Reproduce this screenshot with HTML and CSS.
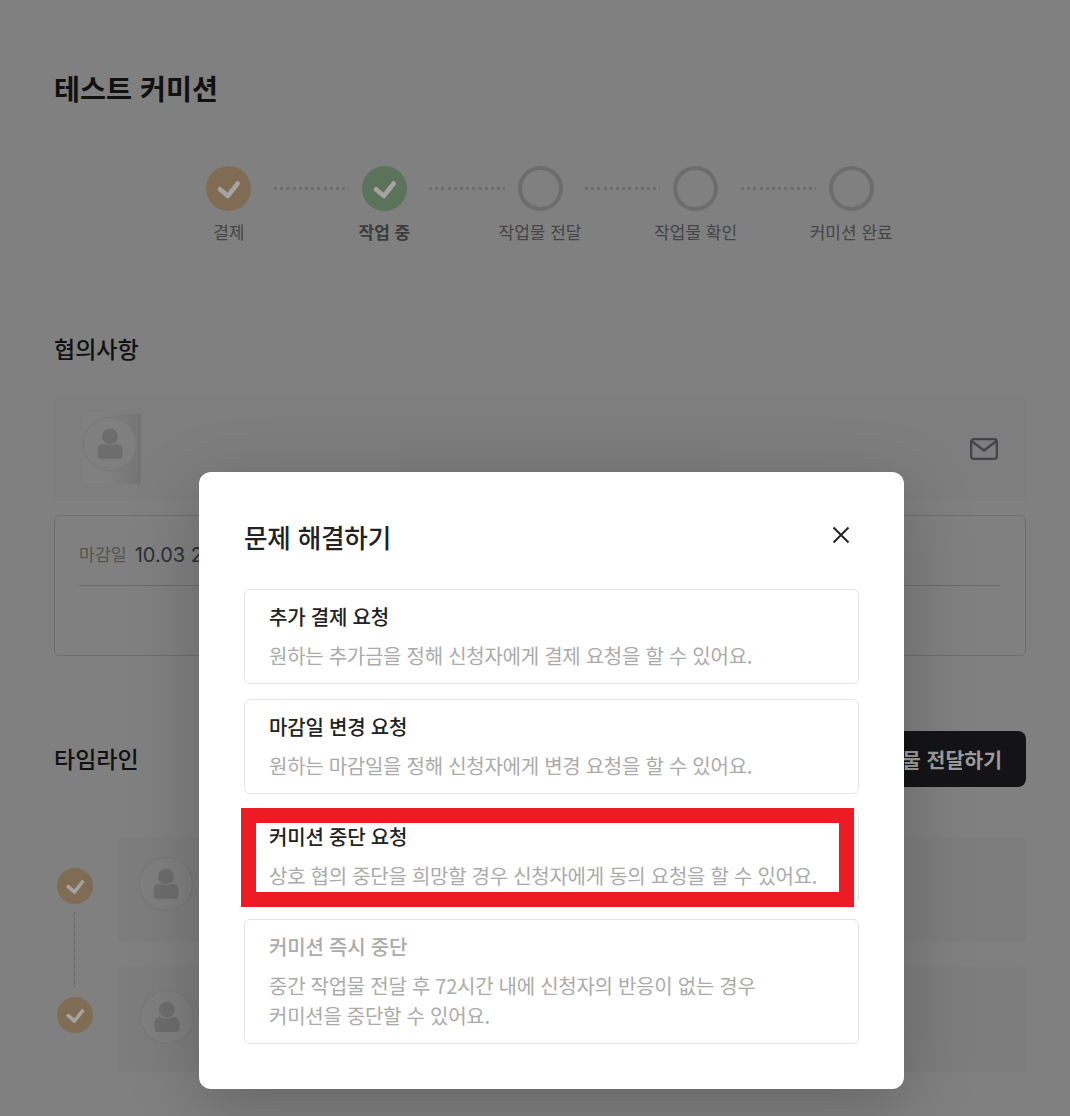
FILE: index.html
```html
<!DOCTYPE html>
<html lang="ko">
<head>
<meta charset="utf-8">
<title>테스트 커미션</title>
<link rel="stylesheet" href="styles.css">
</head>
<body>
<main class="page">
  <h1 class="page-title">테스트 커미션</h1>

  <div class="track">
    <span class="dot dot-orange"><svg viewBox="0 0 45 45" class="check"><path d="M14 23.2L21.8 30L31.7 17.5"/></svg></span>
    <span class="line"></span>
    <span class="dot dot-green"><svg viewBox="0 0 45 45" class="check"><path d="M14 23.2L21.8 30L31.7 17.5"/></svg></span>
    <span class="line"></span>
    <span class="dot dot-empty"></span>
    <span class="line"></span>
    <span class="dot dot-empty"></span>
    <span class="line"></span>
    <span class="dot dot-empty"></span>
  </div>
  <div class="labels">
    <span>결제</span>
    <span class="label-active">작업 중</span>
    <span>작업물 전달</span>
    <span>작업물 확인</span>
    <span>커미션 완료</span>
  </div>

  <h2 class="section-title section-discuss">협의사항</h2>
  <section class="profile">
    <div class="profile-photo">
      <svg viewBox="0 0 54 54" class="avatar avatar-top"><circle cx="27" cy="27" r="26.5" class="avatar-ring"/><path class="avatar-body" d="M21 27H33C37 27 39.5 29 39.5 32.5V38C39.5 40.5 38 42 35.5 42H18.5C16 42 14.5 40.5 14.5 38V32.5C14.5 29 17 27 21 27Z"/><circle cx="27" cy="19.5" r="8.5" class="avatar-head"/></svg>
    </div>
    <div class="profile-blur"></div>
    <svg viewBox="0 0 28 22" class="mail"><rect x="1.2" y="1.2" width="25.6" height="19.6" rx="2.5"/><path d="M1.5 3L14 12.5L26.5 3"/></svg>
  </section>
  <section class="info">
    <div class="info-row">
      <span class="info-key">마감일</span>
      <span class="info-value">10.03 2024</span>
    </div>
  </section>

  <div class="timeline-head">
    <h2 class="section-title section-timeline">타임라인</h2>
    <button class="deliver">작업물 전달하기</button>
  </div>

  <div class="timeline">
    <div class="marks">
      <svg viewBox="0 0 45 45" class="mark"><path d="M14 23.2L21.8 30L31.7 17.5"/></svg>
      <span class="mark-line"></span>
      <svg viewBox="0 0 45 45" class="mark"><path d="M14 23.2L21.8 30L31.7 17.5"/></svg>
    </div>
    <div class="entries">
      <div class="entry">
        <svg viewBox="0 0 54 54" class="avatar"><circle cx="27" cy="27" r="26.5" class="avatar-ring"/><path class="avatar-body" d="M21 27H33C37 27 39.5 29 39.5 32.5V38C39.5 40.5 38 42 35.5 42H18.5C16 42 14.5 40.5 14.5 38V32.5C14.5 29 17 27 21 27Z"/><circle cx="27" cy="19.5" r="8.5" class="avatar-head"/></svg>
      </div>
      <div class="entry entry-second">
        <svg viewBox="0 0 54 54" class="avatar"><circle cx="27" cy="27" r="26.5" class="avatar-ring"/><path class="avatar-body" d="M21 27H33C37 27 39.5 29 39.5 32.5V38C39.5 40.5 38 42 35.5 42H18.5C16 42 14.5 40.5 14.5 38V32.5C14.5 29 17 27 21 27Z"/><circle cx="27" cy="19.5" r="8.5" class="avatar-head"/></svg>
      </div>
    </div>
  </div>
</main>

<div class="modal" role="dialog">
  <div class="modal-head">
    <h2 class="modal-title">문제 해결하기</h2>
    <svg viewBox="0 0 18 18" class="close"><path d="M1.5 1.5L16.5 16.5M16.5 1.5L1.5 16.5"/></svg>
  </div>
  <div class="options">
    <div class="option">
      <div class="option-title">추가 결제 요청</div>
      <p class="option-desc">원하는 추가금을 정해 신청자에게 결제 요청을 할 수 있어요.</p>
    </div>
    <div class="option">
      <div class="option-title">마감일 변경 요청</div>
      <p class="option-desc">원하는 마감일을 정해 신청자에게 변경 요청을 할 수 있어요.</p>
    </div>
    <div class="option">
      <div class="option-title">커미션 중단 요청</div>
      <p class="option-desc">상호 협의 중단을 희망할 경우 신청자에게 동의 요청을 할 수 있어요.</p>
    </div>
    <div class="option option-off">
      <div class="option-title">커미션 즉시 중단</div>
      <p class="option-desc">중간 작업물 전달 후 72시간 내에 신청자의 반응이 없는 경우<br>커미션을 중단할 수 있어요.</p>
    </div>
  </div>
  <div class="highlight"></div>
</div>
</body>
</html>
```

FILE: styles.css
```css
* { box-sizing: border-box; }
html, body { margin: 0; height: 1116px; overflow: hidden; }
body {
  position: relative;
  background: #808080;
  font-family: "Noto Sans CJK KR", "Noto Sans", sans-serif;
  color: #111;
}
.page { padding: 68px 44px 0 54px; }
.page-title { margin: 0; font-size: 28.3px; line-height: 40px; font-weight: 700; color: #111; }

.track {
  display: grid;
  grid-template-columns: 45px 1fr 45px 1fr 45px 1fr 45px 1fr 45px;
  width: 668px;
  margin: 58px 0 0 152px;
  align-items: center;
}
.dot { width: 45px; height: 45px; border-radius: 50%; display: block; }
.dot-orange { background: #806c54; }
.dot-green { background: #5b725b; }
.dot-empty { border: 4px solid #6d6d6d; }
.check { display: block; width: 45px; height: 45px; fill: none; stroke: #a6a4a2; stroke-width: 4.5; stroke-linecap: round; stroke-linejoin: round; }
.line {
  height: 3px;
  margin: 0 13px 0 22.5px;
  background: repeating-linear-gradient(90deg, #6e6e6e 0 3px, transparent 3px 6.2px);
}
.labels {
  display: grid;
  grid-template-columns: repeat(5, 1fr);
  width: 778px;
  margin: 8px auto 0;
  text-align: center;
  font-size: 17px;
  line-height: 26px;
  color: #454545;
}
.label-active { font-weight: 700; color: #3c3c3c; }

.section-title { margin: 0; font-size: 23px; line-height: 32px; font-weight: 500; color: #111; }
.section-discuss { margin-top: 87px; }
.section-timeline { padding-bottom: 3px; }

.profile {
  display: flex;
  align-items: center;
  height: 102px;
  margin-top: 34px;
  padding: 0 28px 0 29px;
  background: #7e7e7e;
}
.profile-photo {
  width: 58px;
  height: 70px;
  background: linear-gradient(90deg, #808080 40%, #747474);
  flex: none;
}
.profile-blur { flex: 1; align-self: stretch; margin: 38px 250px 0 260px; background: #7d7d7d; }
.avatar { display: block; width: 54px; height: 54px; }
.avatar-top { margin-top: 3px; }
.avatar-ring { fill: #7f7f7f; stroke: #777; }
.avatar-body { fill: #6d6d6d; }
.avatar-head { fill: #6d6d6d; stroke: #808080; stroke-width: 1.2; }
.mail { width: 28px; height: 22px; flex: none; fill: none; stroke: #42444a; stroke-width: 2.3; stroke-linejoin: round; }

.info {
  height: 141px;
  margin-top: 15px;
  padding: 0 25px 0 24px;
  border: 1px solid #6e6e6e;
  border-radius: 6px;
}
.info-row {
  display: flex;
  align-items: center;
  gap: 8px;
  height: 70px;
  padding-top: 9px;
  border-bottom: 1px solid #6c6c6c;
}
.info-key { font-size: 17.3px; color: #57534d; position: relative; top: -2px; }
.info-value { font-size: 20px; color: #2c2f36; font-family: "Inter", "Noto Sans CJK KR", sans-serif; }

.timeline-head {
  display: flex;
  align-items: center;
  justify-content: space-between;
  margin-top: 75px;
}
.deliver {
  width: 240px;
  height: 56px;
  padding: 0 24px 0 0;
  border: 0;
  border-radius: 8px;
  background: #141416;
  color: #9c9c9c;
  font: 700 20.5px "Noto Sans CJK KR", sans-serif;
  text-align: right;
}

.timeline { display: flex; margin-top: 51px; }
.marks { width: 64px; flex: none; display: flex; flex-direction: column; padding: 30px 0 0 3px; }
.mark { display: block; width: 36px; height: 36px; border-radius: 50%; background: #806c54; fill: none; stroke: #a6a4a2; stroke-width: 4.5; stroke-linecap: round; stroke-linejoin: round; }
.mark-line { width: 0; height: 76px; margin: 8px 0 9px 17px; border-left: 1px dotted #5e5e5e; }
.entries { flex: 1; display: flex; flex-direction: column; gap: 25px; }
.entry { height: 104px; padding: 19px 0 0 21px; background: #7d7d7d; border-radius: 4px; }
.entry-second { height: 105px; padding: 23px 0 0 22px; }

.modal {
  position: absolute;
  left: 199px;
  top: 472px;
  width: 705px;
  height: 617px;
  padding: 46px 45px 45px;
  background: #fff;
  border-radius: 12px;
  box-shadow: 0 16px 70px rgba(0, 0, 0, 0.22);
  letter-spacing: -0.0125em;
}
.modal-head { display: flex; justify-content: space-between; align-items: flex-start; }
.modal-title { margin: 0; font-size: 25.6px; line-height: 38px; font-weight: 500; color: #222; }
.close { width: 18px; height: 18px; margin: 8px 9px 0 0; fill: none; stroke: #222; stroke-width: 2; }
.options { display: flex; flex-direction: column; gap: 15px; margin-top: 33px; }
.option { padding: 11px 24px 12px; border: 1px solid #e4e4e4; border-radius: 6px; }
.option-title { font-size: 20px; line-height: 32px; font-weight: 500; color: #222; }
.option-desc { margin: 8px 0 0; font-size: 20px; line-height: 30px; color: #aaa; white-space: nowrap; letter-spacing: -0.0135em; }
.option-off .option-title { color: #aaa; }
.highlight {
  position: absolute;
  left: 42px;
  top: 336px;
  width: 613px;
  height: 99px;
  border: 15px solid #ed1c24;
}
```
